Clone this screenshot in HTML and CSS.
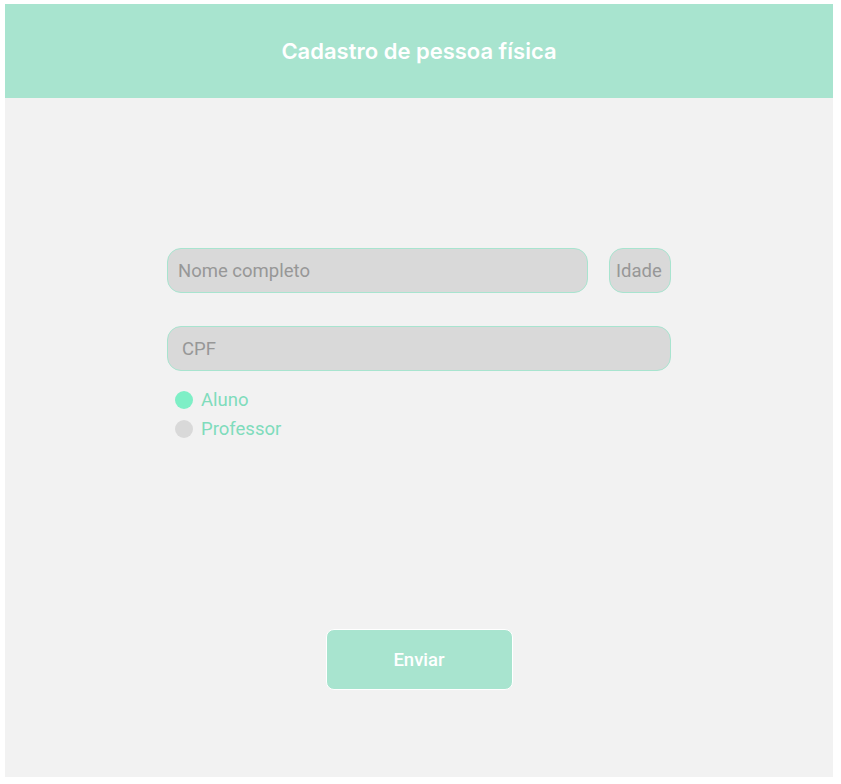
FILE: index.html
```html
<!DOCTYPE html>
<html lang="pt-BR">
<head>
<meta charset="utf-8">
<title>Cadastro de pessoa física</title>
<link rel="stylesheet" href="styles.css">
</head>
<body>
<div class="panel">
  <header class="header"><h1 class="title">Cadastro de pessoa física</h1></header>
  <main class="content">
    <form class="form">
      <div class="row">
        <input class="field field-name" type="text" placeholder="Nome completo">
        <input class="field field-age" type="text" placeholder="Idade">
      </div>
      <input class="field field-cpf" type="text" placeholder="CPF">
      <div class="radios">
        <label class="radio"><span class="dot dot-on"></span>Aluno</label>
        <label class="radio"><span class="dot"></span>Professor</label>
      </div>
    </form>
    <button class="submit" type="button">Enviar</button>
  </main>
</div>
</body>
</html>
```
FILE: styles.css
```css
html, body { margin: 0; padding: 0; background: #ffffff; }
body { font-family: Roboto, "Noto Sans", sans-serif; padding: 4px 8px 7px 5px; }
.panel { width: 828px; height: 773px; background: #f2f2f2; display: flex; flex-direction: column; }
.header { height: 94px; background: #a8e4cf; display: flex; align-items: center; justify-content: center; }
.title { margin: 0; font-family: Inter, Roboto, sans-serif; font-weight: 600; font-size: 22px; color: #ffffff; }
.content { flex: 1; display: flex; flex-direction: column; align-items: center; padding-top: 150px; }
.form { width: 504px; display: flex; flex-direction: column; }
.row { display: flex; gap: 21px; margin-bottom: 33px; }
.field { box-sizing: border-box; height: 45px; border: 1px solid #a8e4cf; border-radius: 14px; background: #d9d9d9; font-family: Roboto, sans-serif; font-size: 18.5px; color: #999; padding: 0 0 0 10px; outline: none; }
.field::placeholder { color: #979797; }
.field-name { flex: 1; min-width: 0; }
.field-age { width: 62px; padding-left: 6px; }
.field-cpf { width: 100%; padding-left: 14px; }
.radios { display: flex; flex-direction: column; gap: 9px; margin-top: 19px; padding-left: 8px; }
.radio { display: flex; align-items: center; gap: 8px; font-size: 18.5px; color: #7fdcbc; height: 20px; }
.dot { width: 18px; height: 18px; border-radius: 50%; background: #d9d9d9; }
.dot-on { background: #7eefc6; }
.submit { margin-top: 190px; width: 187px; height: 61px; box-sizing: border-box; border: 1px solid #ffffff; border-radius: 8px; background: #a8e4cf; color: #ffffff; font-family: Roboto, sans-serif; font-weight: 500; font-size: 18.5px; }
```
